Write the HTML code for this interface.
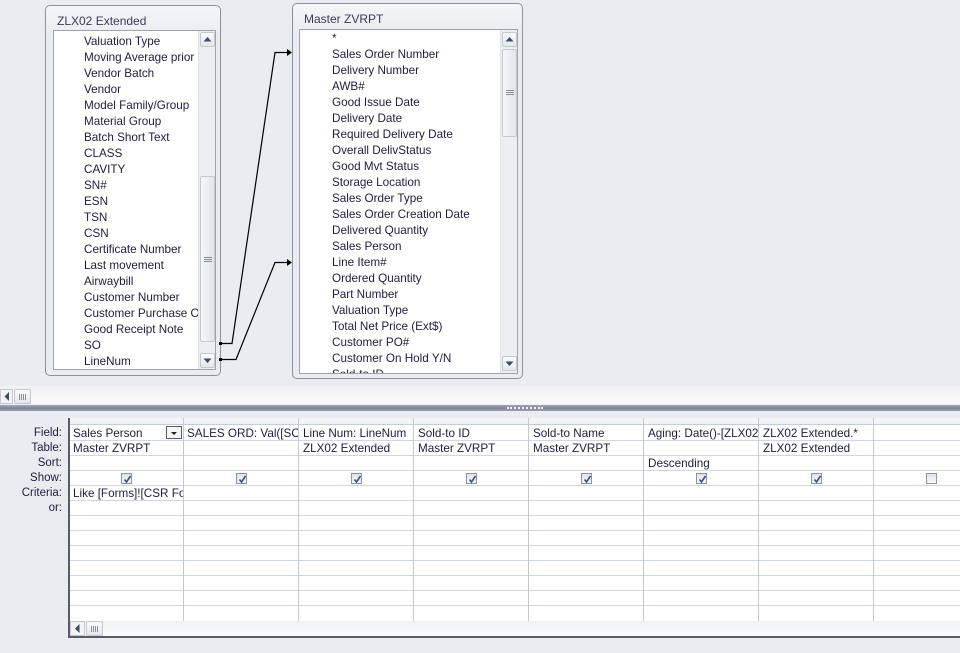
<!DOCTYPE html>
<html><head><meta charset="utf-8"><style>
*{margin:0;padding:0;box-sizing:border-box}
body{width:960px;height:653px;background:#e9ecf0;font-family:"Liberation Sans",sans-serif;font-size:11.7px;color:#1e1e3c;position:relative;overflow:hidden}
.a{position:absolute}
.tbl{position:absolute;border:1px solid #8e9199;border-radius:5px;background:linear-gradient(#f5f6f8,#e9ecf0 30px)}
.tbl .t{position:absolute;left:11px;top:8px;font-size:12px;color:#3b3b5a}
.list{position:absolute;background:#fff;border:1px solid #9ea3ad;overflow:hidden}
.list div{position:absolute;white-space:nowrap}
.sb{position:absolute;background:#eceef1;border-left:1px solid #e0e2e6}
.btn{position:absolute;left:1px;width:15px;height:15px;border:1px solid #c4c8cf;border-radius:2px;background:linear-gradient(#fbfbfc,#e4e7eb)}
.thumb{position:absolute;left:1px;width:15px;border:1px solid #c4c8cf;border-radius:2px;background:linear-gradient(90deg,#f6f7f9,#e1e4e9)}
.g div{position:absolute;white-space:nowrap}
.lbl{position:absolute;right:898px;text-align:right;font-size:11.5px;color:#1e1e3c}
.cb{position:absolute;width:11px;height:11px;border:1px solid #8d929b;background:linear-gradient(#dfe3ea,#f7f8fa)}
.cb svg{position:absolute;left:0;top:0}
</style></head><body>

<div class="tbl" style="left:45px;top:5px;width:176px;height:371px">
 <div class="t">ZLX02 Extended</div>
 <div class="list" style="left:7px;top:24px;width:163px;height:340px">
  <div style="left:30px;top:4px">Valuation Type</div>
  <div style="left:30px;top:20px">Moving Average prior</div>
  <div style="left:30px;top:36px">Vendor Batch</div>
  <div style="left:30px;top:52px">Vendor</div>
  <div style="left:30px;top:68px">Model Family/Group</div>
  <div style="left:30px;top:84px">Material Group</div>
  <div style="left:30px;top:100px">Batch Short Text</div>
  <div style="left:30px;top:116px">CLASS</div>
  <div style="left:30px;top:132px">CAVITY</div>
  <div style="left:30px;top:148px">SN#</div>
  <div style="left:30px;top:164px">ESN</div>
  <div style="left:30px;top:180px">TSN</div>
  <div style="left:30px;top:196px">CSN</div>
  <div style="left:30px;top:212px">Certificate Number</div>
  <div style="left:30px;top:228px">Last movement</div>
  <div style="left:30px;top:244px">Airwaybill</div>
  <div style="left:30px;top:260px">Customer Number</div>
  <div style="left:30px;top:276px">Customer Purchase Or</div>
  <div style="left:30px;top:292px">Good Receipt Note</div>
  <div style="left:30px;top:308px">SO</div>
  <div style="left:30px;top:324px">LineNum</div>
  <div class="sb" style="left:144px;top:0;width:18px;height:338px">
   <div class="btn" style="top:1px"><svg width="13" height="13"><path d="M2.5 8.5h8L6.5 4z" fill="#3d4a6b"/></svg></div>
   <div class="thumb" style="top:145px;height:166px"><div style="position:absolute;left:3px;top:80px;width:8px;height:5px;border-top:1px solid #8a8f99;border-bottom:1px solid #8a8f99"></div><div style="position:absolute;left:3px;top:82px;width:8px;border-top:1px solid #8a8f99"></div></div>
   <div class="btn" style="top:322px"><svg width="13" height="13"><path d="M2.5 4.5h8L6.5 9z" fill="#3d4a6b"/></svg></div>
  </div>
 </div>
</div>

<div class="tbl" style="left:292px;top:3px;width:231px;height:376px">
 <div class="t">Master ZVRPT</div>
 <div class="list" style="left:6px;top:25px;width:219px;height:345px">
  <div style="left:32px;top:2px">*</div>
  <div style="left:32px;top:18px">Sales Order Number</div>
  <div style="left:32px;top:34px">Delivery Number</div>
  <div style="left:32px;top:50px">AWB#</div>
  <div style="left:32px;top:66px">Good Issue Date</div>
  <div style="left:32px;top:82px">Delivery Date</div>
  <div style="left:32px;top:98px">Required Delivery Date</div>
  <div style="left:32px;top:114px">Overall DelivStatus</div>
  <div style="left:32px;top:130px">Good Mvt Status</div>
  <div style="left:32px;top:146px">Storage Location</div>
  <div style="left:32px;top:162px">Sales Order Type</div>
  <div style="left:32px;top:178px">Sales Order Creation Date</div>
  <div style="left:32px;top:194px">Delivered Quantity</div>
  <div style="left:32px;top:210px">Sales Person</div>
  <div style="left:32px;top:226px">Line Item#</div>
  <div style="left:32px;top:242px">Ordered Quantity</div>
  <div style="left:32px;top:258px">Part Number</div>
  <div style="left:32px;top:274px">Valuation Type</div>
  <div style="left:32px;top:290px">Total Net Price (Ext$)</div>
  <div style="left:32px;top:306px">Customer PO#</div>
  <div style="left:32px;top:322px">Customer On Hold Y/N</div>
  <div style="left:32px;top:338px">Sold-to ID</div>
  <div class="sb" style="left:200px;top:0;width:18px;height:343px">
   <div class="btn" style="top:2px"><svg width="13" height="13"><path d="M2.5 8.5h8L6.5 4z" fill="#3d4a6b"/></svg></div>
   <div class="thumb" style="top:19px;height:88px"><div style="position:absolute;left:3px;top:40px;width:8px;height:5px;border-top:1px solid #8a8f99;border-bottom:1px solid #8a8f99"></div><div style="position:absolute;left:3px;top:42px;width:8px;border-top:1px solid #8a8f99"></div></div>
   <div class="btn" style="top:326px"><svg width="13" height="13"><path d="M2.5 4.5h8L6.5 9z" fill="#3d4a6b"/></svg></div>
  </div>
 </div>
</div>

<svg class="a" style="left:0;top:0" width="960" height="400">
 <g stroke="#000" stroke-width="1.2" fill="none">
  <path d="M221 343.5H232L275 52.5H288"/>
  <path d="M221 359.5H236L275 262.5H288"/>
 </g>
 <path d="M287 49v7l5-3.5z" fill="#000"/>
 <path d="M287 259v7l5-3.5z" fill="#000"/>
 <rect x="219" y="342" width="3" height="3" fill="#000"/>
 <rect x="219" y="358" width="3" height="3" fill="#000"/>
</svg>

<div class="a" style="left:0;top:386px;width:960px;height:18px;background:linear-gradient(#f0f1f3,#fafafa)"></div>
<div class="a" style="left:0;top:389px;width:13px;height:15px;border:1px solid #c4c8cf;background:#f3f4f6"><svg width="11" height="13"><path d="M8 2v9L3.5 6.5z" fill="#3d4a6b"/></svg></div>
<div class="a" style="left:14px;top:389px;width:17px;height:15px;border:1px solid #c4c8cf;border-radius:2px;background:linear-gradient(#fbfbfc,#e4e7eb)"><svg width="15" height="13"><path d="M4.5 4v6M6.5 4v6M8.5 4v6M10.5 4v6" stroke="#8a8f99"/></svg></div>

<div class="a" style="left:0;top:405px;width:960px;height:6px;background:linear-gradient(#a8abbb,#7f8397 50%,#9b9eb0)"></div>
<div class="a" style="left:507px;top:407px;width:36px;height:2px;border-top:2px dotted #f2f2f5"></div>

<div class="a" style="left:68px;top:418px;width:892px;height:220px;border-left:2px solid #5a5c64;border-bottom:2px solid #5a5c64;background:#fff"></div>
<div class="a" style="left:70px;top:418px;width:890px;height:7px;background:#f3f4f6;border-bottom:1px solid #c5ccda"></div>
<svg class="a" style="left:70px;top:418px" width="890" height="203">
 <g stroke="#d0d6e2" stroke-width="1">
  <path d="M0 22.5H890M0 37.5H890M0 52.5H890M0 67.5H890M0 82.5H890M0 97.5H890M0 112.5H890M0 127.5H890M0 142.5H890M0 157.5H890M0 172.5H890M0 187.5H890"/>
 </g>
 <g stroke="#c3c9d4" stroke-width="1">
  <path d="M113.5 0V203M228.5 0V203M343.5 0V203M458.5 0V203M573.5 0V203M688.5 0V203M803.5 0V203"/>
 </g>
</svg>
<div class="lbl" style="top:427px">Field:</div>
<div class="lbl" style="top:442px">Table:</div>
<div class="lbl" style="top:457px">Sort:</div>
<div class="lbl" style="top:472px">Show:</div>
<div class="lbl" style="top:487px">Criteria:</div>
<div class="lbl" style="top:502px">or:</div>

<div class="g">
 <div style="left:73px;top:427px">Sales Person</div>
 <div style="left:166px;top:426px;width:16px;height:13px;border:1px solid #5a5c64;background:#f4f5f7"><svg width="14" height="11"><path d="M4 5h6l-3 3z" fill="#222"/></svg></div>
 <div style="left:187px;top:427px;width:111px;overflow:hidden">SALES ORD: Val([SO])</div>
 <div style="left:303px;top:427px">Line Num: LineNum</div>
 <div style="left:418px;top:427px">Sold-to ID</div>
 <div style="left:533px;top:427px">Sold-to Name</div>
 <div style="left:648px;top:427px;width:110px;overflow:hidden">Aging: Date()-[ZLX02 Ext</div>
 <div style="left:763px;top:427px">ZLX02 Extended.*</div>

 <div style="left:73px;top:442px">Master ZVRPT</div>
 <div style="left:303px;top:442px">ZLX02 Extended</div>
 <div style="left:418px;top:442px">Master ZVRPT</div>
 <div style="left:533px;top:442px">Master ZVRPT</div>
 <div style="left:763px;top:442px">ZLX02 Extended</div>

 <div style="left:648px;top:457px">Descending</div>

 <div style="left:73px;top:487px;width:110px;overflow:hidden">Like [Forms]![CSR Form</div>
</div>

<div class="cb" style="left:121px;top:473px"><svg width="11" height="11"><path d="M2.5 5.5l2 2.5 4-6" stroke="#3d4f86" stroke-width="1.6" fill="none"/></svg></div>
<div class="cb" style="left:236px;top:473px"><svg width="11" height="11"><path d="M2.5 5.5l2 2.5 4-6" stroke="#3d4f86" stroke-width="1.6" fill="none"/></svg></div>
<div class="cb" style="left:351px;top:473px"><svg width="11" height="11"><path d="M2.5 5.5l2 2.5 4-6" stroke="#3d4f86" stroke-width="1.6" fill="none"/></svg></div>
<div class="cb" style="left:466px;top:473px"><svg width="11" height="11"><path d="M2.5 5.5l2 2.5 4-6" stroke="#3d4f86" stroke-width="1.6" fill="none"/></svg></div>
<div class="cb" style="left:581px;top:473px"><svg width="11" height="11"><path d="M2.5 5.5l2 2.5 4-6" stroke="#3d4f86" stroke-width="1.6" fill="none"/></svg></div>
<div class="cb" style="left:696px;top:473px"><svg width="11" height="11"><path d="M2.5 5.5l2 2.5 4-6" stroke="#3d4f86" stroke-width="1.6" fill="none"/></svg></div>
<div class="cb" style="left:811px;top:473px"><svg width="11" height="11"><path d="M2.5 5.5l2 2.5 4-6" stroke="#3d4f86" stroke-width="1.6" fill="none"/></svg></div>
<div class="cb" style="left:926px;top:473px"></div>

<div class="a" style="left:70px;top:621px;width:890px;height:15px;background:linear-gradient(#f0f1f3,#fafafa)"></div>
<div class="a" style="left:70px;top:621px;width:15px;height:15px;border:1px solid #c4c8cf;background:#f3f4f6"><svg width="13" height="13"><path d="M8.5 2v9L4 6.5z" fill="#3d4a6b"/></svg></div>
<div class="a" style="left:86px;top:621px;width:17px;height:15px;border:1px solid #c4c8cf;border-radius:2px;background:linear-gradient(#fbfbfc,#e4e7eb)"><svg width="15" height="13"><path d="M4.5 4v6M6.5 4v6M8.5 4v6M10.5 4v6" stroke="#8a8f99"/></svg></div>
</body></html>
